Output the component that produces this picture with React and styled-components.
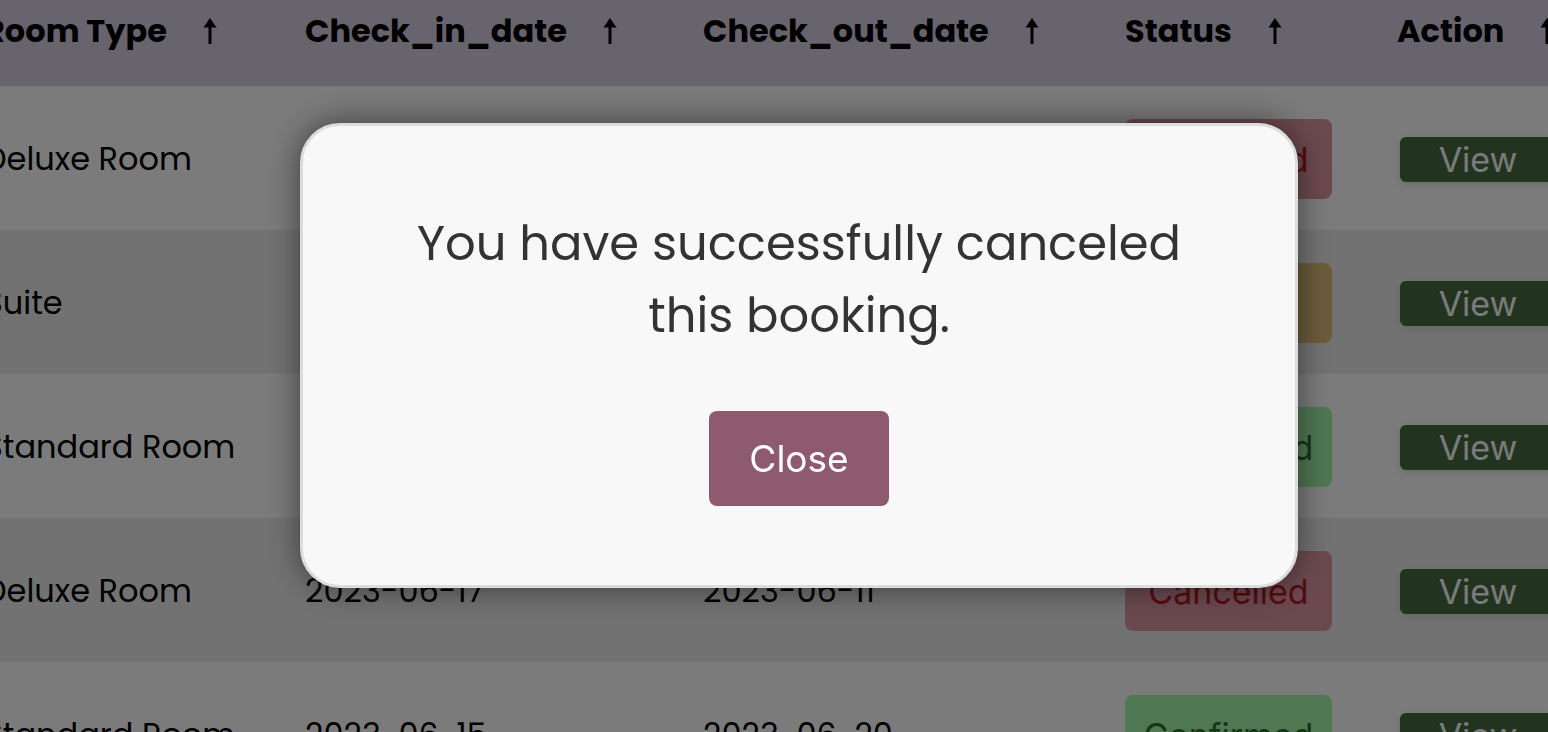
import React from "react";
import styled, { createGlobalStyle } from "styled-components";

const GlobalStyle = createGlobalStyle`
  html, body {
    margin: 0;
    padding: 0;
    overflow: hidden;
    background: #f6f6f6;
  }
  body {
    font-family: "Poppins", "Open Sans", sans-serif;
  }
`;

const Page = styled.div`
  width: 1548px;
  height: 732px;
  overflow: hidden;
`;

const Table = styled.div`
  margin-left: -16px;
  width: 1600px;
  display: grid;
  grid-template-columns: 321px 398px 422px 272px 185px;
`;

const HeadCell = styled.div`
  height: 86px;
  box-sizing: border-box;
  padding-bottom: 24px;
  display: flex;
  align-items: center;
  gap: 36px;
  background: #cec8da;
  color: #000;
  font-size: 32px;
  font-weight: 700;
`;

const Cell = styled.div`
  height: 144px;
  box-sizing: border-box;
  padding-top: 2px;
  display: flex;
  align-items: center;
  background: ${(p) => (p.$odd ? "#e5e5e5" : "#f6f6f6")};
  color: #000;
  font-size: 32px;
`;

const badgeColors = {
  Cancelled: { bg: "#d6949f", fg: "#b01622" },
  Pending: { bg: "#d6b876", fg: "#7a5a10" },
  Confirmed: { bg: "#9eeea4", fg: "#2a6a2e" },
};

const Badge = styled.div`
  width: 207px;
  height: 80px;
  border-radius: 8px;
  display: flex;
  align-items: center;
  justify-content: center;
  font-family: "Inter", "Liberation Sans", sans-serif;
  font-size: 34px;
  background: ${(p) => badgeColors[p.$status].bg};
  color: ${(p) => badgeColors[p.$status].fg};
`;

const ViewButton = styled.button`
  margin-left: 3px;
  width: 156px;
  height: 45px;
  border: none;
  border-radius: 6px;
  padding: 0;
  background: #446840;
  color: #f4f4f4;
  font-family: "Inter", "Liberation Sans", sans-serif;
  font-size: 34px;
  line-height: 45px;
  box-shadow: 0 3px 8px rgba(0, 0, 0, 0.12);
`;

const Overlay = styled.div`
  position: fixed;
  inset: 0;
  background: rgba(0, 0, 0, 0.5);
  display: flex;
  align-items: center;
  justify-content: center;
  padding: 0 0 21px 50px;
`;

const Modal = styled.div`
  box-sizing: border-box;
  width: 998px;
  height: 465px;
  padding-top: 3px;
  background: #f8f8f8;
  border: 3px solid #dcdcdc;
  border-radius: 40px;
  box-shadow: 0 0 32px rgba(0, 0, 0, 0.5);
  display: flex;
  flex-direction: column;
  align-items: center;
  justify-content: center;
  gap: 59px;
`;

const Message = styled.p`
  margin: 0;
  text-align: center;
  font-size: 48px;
  line-height: 72px;
  color: #333;
`;

const CloseButton = styled.button`
  width: 180px;
  height: 95px;
  border: none;
  border-radius: 8px;
  padding: 0;
  background: #8e5a6f;
  color: #fff;
  font-family: "Inter", "Liberation Sans", sans-serif;
  font-size: 37px;
  cursor: pointer;
`;

const SortArrow = () => (
  <svg width="14" height="26" viewBox="0 0 14 26" fill="#000">
    <path d="M7 0 L13.5 9.5 H8.5 V26 H5.5 V9.5 H0.5 Z" />
  </svg>
);

const columns = ["Room Type", "Check_in_date", "Check_out_date", "Status", "Action"];

const bookings = [
  { room: "Deluxe Room", checkIn: "2023-06-08", checkOut: "2023-06-12", status: "Cancelled" },
  { room: "Suite", checkIn: "2023-06-10", checkOut: "2023-06-14", status: "Pending" },
  { room: "Standard Room", checkIn: "2023-06-12", checkOut: "2023-06-16", status: "Confirmed" },
  { room: "Deluxe Room", checkIn: "2023-06-17", checkOut: "2023-06-11", status: "Cancelled" },
  { room: "Standard Room", checkIn: "2023-06-15", checkOut: "2023-06-20", status: "Confirmed" },
];

export default function App() {
  return (
    <Page>
      <GlobalStyle />
      <Table>
        {columns.map((c) => (
          <HeadCell key={c}>
            {c}
            <SortArrow />
          </HeadCell>
        ))}
        {bookings.map((b, i) => (
          <React.Fragment key={i}>
            <Cell $odd={i % 2 === 1}>{b.room}</Cell>
            <Cell $odd={i % 2 === 1}>{b.checkIn}</Cell>
            <Cell $odd={i % 2 === 1}>{b.checkOut}</Cell>
            <Cell $odd={i % 2 === 1}>
              <Badge $status={b.status}>{b.status}</Badge>
            </Cell>
            <Cell $odd={i % 2 === 1}>
              <ViewButton>View</ViewButton>
            </Cell>
          </React.Fragment>
        ))}
      </Table>
      <Overlay>
        <Modal>
          <Message>
            You have successfully canceled
            <br />
            this booking.
          </Message>
          <CloseButton>Close</CloseButton>
        </Modal>
      </Overlay>
    </Page>
  );
}
